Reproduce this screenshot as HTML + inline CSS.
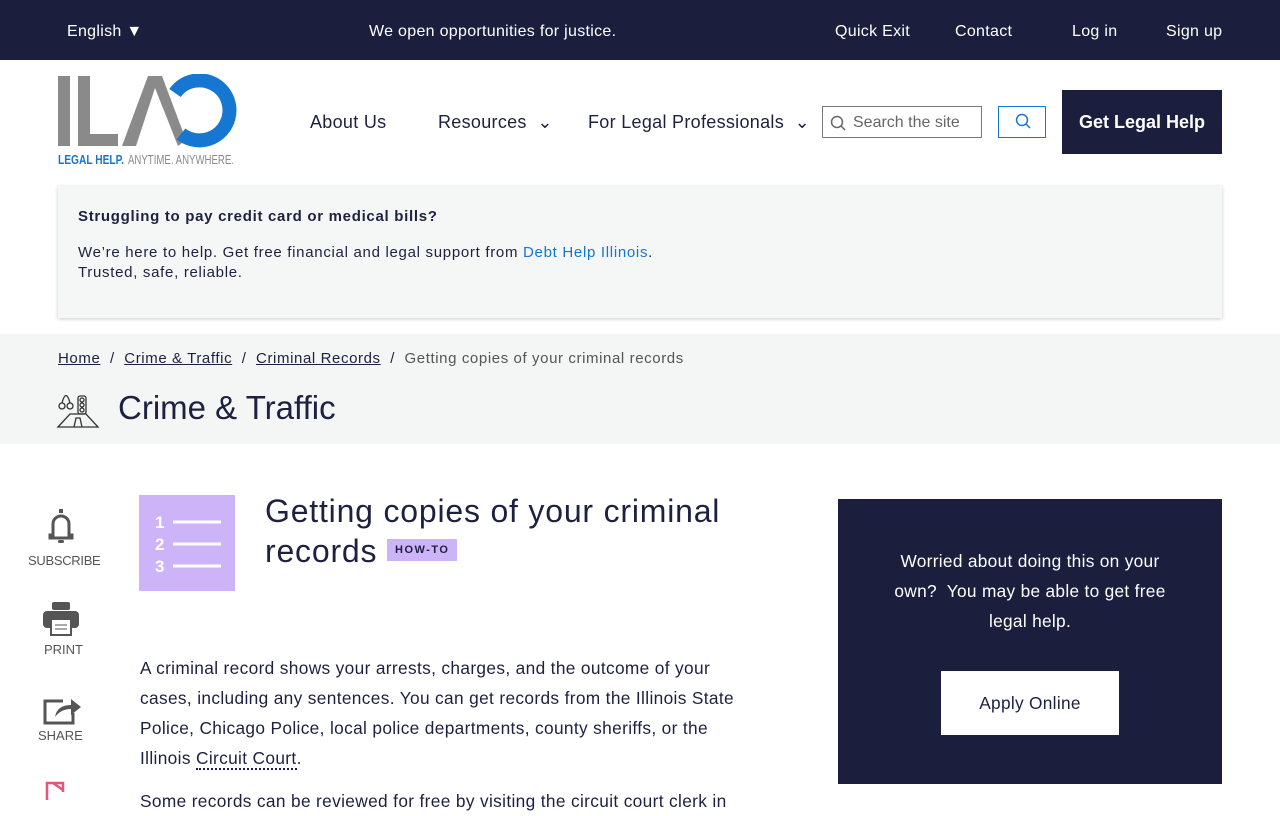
<!DOCTYPE html>
<html><head><meta charset="utf-8"><style>
*{margin:0;padding:0;box-sizing:border-box}
body{width:1280px;height:800px;overflow:hidden;font-family:"Liberation Sans",sans-serif;color:#1d2140;background:#fff;position:relative}
.top{height:60px;background:#1b1e3c;color:#fff;font-size:16px;position:relative}
.top span{position:absolute;top:23px;letter-spacing:.3px}
.abs{position:absolute}
a{color:inherit}
</style></head><body>
<div class="top">
<span style="left:67px">English ▼</span>
<span style="left:369px">We open opportunities for justice.</span>
<span style="left:835px">Quick Exit</span>
<span style="left:955px">Contact</span>
<span style="left:1072px">Log in</span>
<span style="left:1166px">Sign up</span>
</div>
<!-- logo -->
<svg class="abs" style="left:56px;top:74px" width="186" height="94" viewBox="0 0 186 94">
<rect x="2" y="2" width="12" height="70" fill="#8a8a8a"/>
<rect x="22" y="2" width="12" height="70" fill="#8a8a8a"/>
<rect x="22" y="60" width="40" height="12" fill="#8a8a8a"/>
<polygon points="66,72 92,2 106,2 130,66 122,72 99,14 80,72" fill="#8a8a8a"/>
<path d="M119 19 A30 30 0 1 1 125 60" fill="none" stroke="#1677d2" stroke-width="14"/>
<text x="2" y="90" font-family="Liberation Sans Narrow,Liberation Sans,sans-serif" font-size="13" font-weight="bold" fill="#1677d2" textLength="66" lengthAdjust="spacingAndGlyphs">LEGAL HELP.</text>
<text x="72" y="90" font-family="Liberation Sans Narrow,Liberation Sans,sans-serif" font-size="13" fill="#8a8a8a" textLength="106" lengthAdjust="spacingAndGlyphs">ANYTIME. ANYWHERE.</text>
</svg>
<div class="abs" style="left:310px;top:112px;font-size:18px;letter-spacing:.3px">About Us</div>
<div class="abs" style="left:438px;top:112px;font-size:18px;letter-spacing:.3px">Resources &nbsp;⌄</div>
<div class="abs" style="left:588px;top:112px;font-size:18px;letter-spacing:.3px">For Legal Professionals &nbsp;⌄</div>
<div class="abs" style="left:822px;top:106px;width:160px;height:32px;border:1px solid #777;font-size:16px;color:#666;padding:7px 0 0 30px">Search the site
<svg class="abs" style="left:7px;top:8px" width="16" height="16"><circle cx="7" cy="7" r="5.5" fill="none" stroke="#666" stroke-width="1.5"/><line x1="11" y1="11" x2="15" y2="15" stroke="#666" stroke-width="1.5"/></svg></div>
<div class="abs" style="left:998px;top:106px;width:48px;height:32px;border:1px solid #1677d2">
<svg class="abs" style="left:16px;top:6px" width="16" height="16"><circle cx="7" cy="7" r="5.5" fill="none" stroke="#1677d2" stroke-width="1.5"/><line x1="11" y1="11" x2="15" y2="15" stroke="#1677d2" stroke-width="1.5"/></svg></div>
<div class="abs" style="left:1062px;top:90px;width:160px;height:64px;background:#1b1e3c;color:#fff;font-size:18px;font-weight:bold;text-align:center;line-height:64px">Get Legal Help</div>
<!-- alert -->
<div class="abs" style="left:58px;top:186px;width:1164px;height:132px;background:#f5f6f6;box-shadow:0 1px 4px rgba(0,0,0,.2);padding:21px 20px;font-size:15px;line-height:20px;letter-spacing:.7px">
<b>Struggling to pay credit card or medical bills?</b><br>
<div style="margin-top:16px">We’re here to help. Get free financial and legal support from <span style="color:#1677d2">Debt Help Illinois</span>.<br>Trusted, safe, reliable.</div></div>
<!-- breadcrumb band -->
<div class="abs" style="left:0;top:334px;width:1280px;height:110px;background:#f4f5f5"></div>
<div class="abs" style="left:58px;top:350px;font-size:15px;color:#1d2140;letter-spacing:.6px"><u>Home</u> &nbsp;/&nbsp; <u>Crime &amp; Traffic</u> &nbsp;/&nbsp; <u>Criminal Records</u> &nbsp;/&nbsp; <span style="color:#555">Getting copies of your criminal records</span></div>
<svg class="abs" style="left:56px;top:386px" width="44" height="44" fill="none" stroke="#333" stroke-width="1.3">
<circle cx="6" cy="20" r="3"/><circle cx="14" cy="20" r="3"/><path d="M6 17 Q10 2 14 17"/>
<rect x="22" y="10" width="8" height="18" rx="2"/><circle cx="26" cy="14" r="2"/><circle cx="26" cy="19" r="2"/><circle cx="26" cy="24" r="2"/>
<path d="M2 41 L14 28 L30 28 L42 41 Z M18 41 L20 32 L24 32 L26 41"/></svg>
<div class="abs" style="left:118px;top:389px;font-size:33px">Crime &amp; Traffic</div>
<!-- side icons -->
<svg class="abs" style="left:45px;top:507px" width="32" height="40"><path d="M8 28 V17 a8 8 0 0 1 16 0 V28 h3 v3 H5 v-3 z" fill="none" stroke="#555" stroke-width="3"/><rect x="14" y="2" width="4" height="4" fill="#555"/><rect x="13" y="33" width="6" height="3" rx="1.5" fill="#555"/></svg>
<div class="abs" style="left:28px;top:553px;font-size:13px;color:#555;letter-spacing:-.3px">SUBSCRIBE</div>
<svg class="abs" style="left:43px;top:602px" width="36" height="34"><rect x="9" y="0" width="18" height="8" rx="2" fill="#555"/><rect x="0" y="9" width="36" height="17" rx="4" fill="#555"/><rect x="8" y="17" width="20" height="16" fill="#fff" stroke="#555" stroke-width="2"/><line x1="12" y1="23" x2="24" y2="23" stroke="#555"/><line x1="12" y1="27" x2="24" y2="27" stroke="#555"/></svg>
<div class="abs" style="left:44px;top:642px;font-size:13px;color:#555">PRINT</div>
<svg class="abs" style="left:43px;top:693px" width="38" height="32"><path d="M20 8 H2 V30 H30 V20" fill="none" stroke="#555" stroke-width="3"/><path d="M12 24 Q14 12 28 12 V6 L38 14 L28 22 V16 Q18 16 12 24Z" fill="#555"/></svg>
<div class="abs" style="left:38px;top:728px;font-size:13px;color:#555">SHARE</div>
<svg class="abs" style="left:45px;top:780px" width="36" height="20"><path d="M2 20 V3 H18 V12 M8 3 L18 10" fill="none" stroke="#e8557a" stroke-width="2.5"/></svg>
<!-- main -->
<div class="abs" style="left:139px;top:495px;width:96px;height:96px;background:#cdb4f8">
<svg width="96" height="96"><g fill="#fff" font-family="Liberation Sans" font-weight="bold" font-size="17"><text x="16" y="33">1</text><text x="16" y="55">2</text><text x="16" y="77">3</text></g><g stroke="#fff" stroke-width="3"><line x1="34" y1="27" x2="82" y2="27"/><line x1="34" y1="49" x2="82" y2="49"/><line x1="34" y1="71" x2="82" y2="71"/></g></svg></div>
<div class="abs" style="left:265px;top:491px;font-size:32px;line-height:40px;width:520px;letter-spacing:.8px">Getting copies of your criminal<br>records <span style="display:inline-block;vertical-align:middle;background:#cdb4f8;font-size:11px;letter-spacing:1.5px;font-weight:bold;padding:3px 8px;line-height:16px;position:relative;top:-4px">HOW-TO</span></div>
<div class="abs" style="left:140px;top:653px;width:660px;font-size:17.3px;line-height:30px;letter-spacing:.35px;white-space:nowrap">A criminal record shows your arrests, charges, and the outcome of your<br>cases, including any sentences. You can get records from the Illinois State<br>Police, Chicago Police, local police departments, county sheriffs, or the<br>Illinois <span style="border-bottom:2px dotted #1d2140">Circuit Court</span>.</div>
<div class="abs" style="left:140px;top:786px;width:660px;font-size:17.3px;line-height:30px;white-space:nowrap;letter-spacing:.35px">Some records can be reviewed for free by visiting the circuit court clerk in</div>
<!-- sidebar -->
<div class="abs" style="left:838px;top:499px;width:384px;height:285px;background:#1b1e3c;color:#fff;text-align:center;font-size:17.3px;line-height:30px;padding:47px 0 0;letter-spacing:.3px">Worried about doing this on your<br>own?&nbsp; You may be able to get free<br>legal help.
<div style="margin:35px auto 0;width:178px;height:64px;background:#fff;color:#1d2140;line-height:64px">Apply Online</div></div>
</body></html>
